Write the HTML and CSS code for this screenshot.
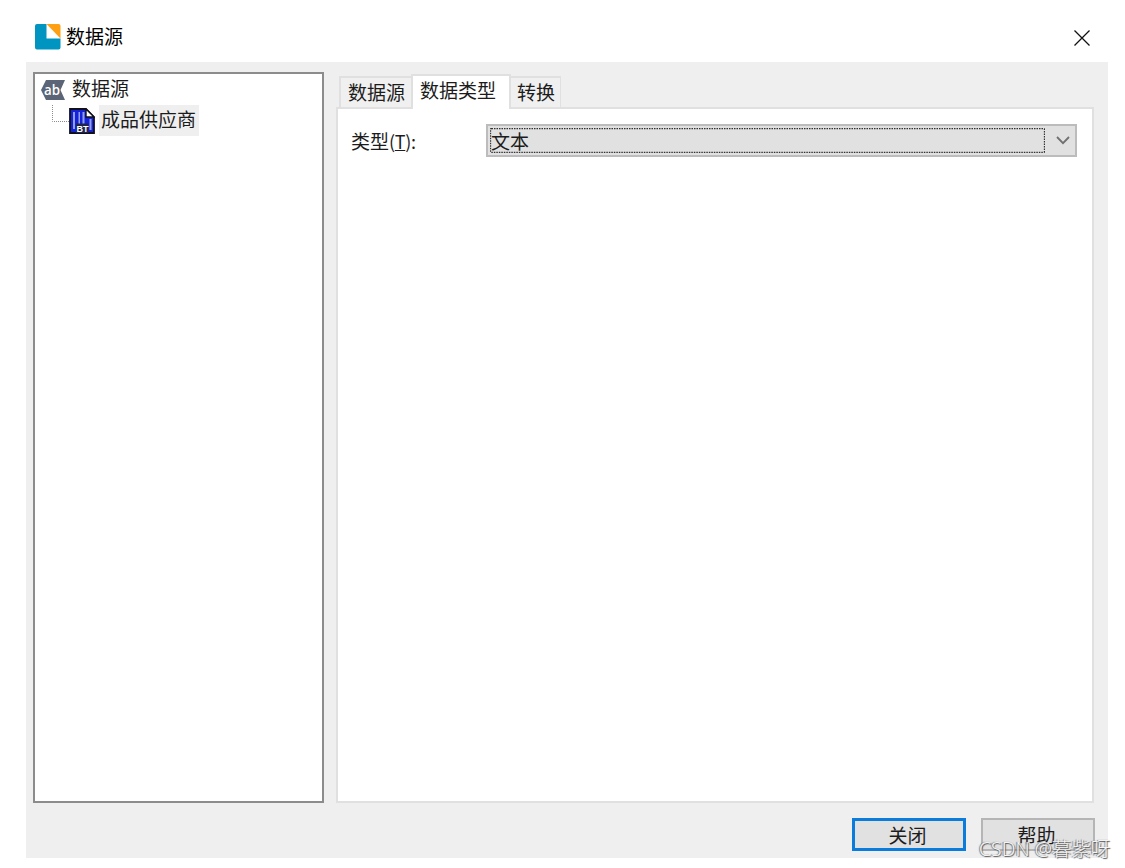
FILE: index.html
```
<!DOCTYPE html>
<html lang="zh-CN">
<head>
    <meta charset="utf-8">
    <title>数据源</title>
    <link rel="stylesheet" href="styles.css">
</head>
<body>
    <div class="dialog">
        <div class="titlebar">
            <svg class="logo" width="26" height="26" viewBox="0 0 26 26">
                <path fill="#0095c1" d="M2 0H11.500V14.500H25.500V23.500Q25.500 25.500 23.500 25.500H2Q0 25.500 0 23.500V2Q0 0 2 0Z"/>
                <path fill="#ffa012" d="M11.500 0H23.500Q25.500 0 25.500 2V14.500Z"/>
            </svg>
            <span class="title">数据源</span>
            <svg class="close" width="16" height="16" viewBox="0 0 16 16">
                <path fill="none" stroke="#111" stroke-width="1.300" d="M.5 .5 15.500 15.500M15.500 .5 .5 15.500"/>
            </svg>
        </div>

        <div class="content">
            <div class="main">
                <div class="tree">
                    <div class="tree-row">
                        <svg class="tag" width="24" height="20" viewBox="0 0 24 20">
                            <path fill="#5b6577" d="M5 0H24L19.500 10 24 20H5L0 10Z"/>
                            <text class="tag-text" x="3" y="15" textLength="16" lengthAdjust="spacingAndGlyphs">ab</text>
                        </svg>
                        <span class="tree-label">数据源</span>
                    </div>
                    <div class="tree-row child">
                        <svg class="branch" width="17" height="32" viewBox="0 0 17 32">
                            <path fill="none" stroke="#8c8c8c" stroke-dasharray="1 1" d="M.5 0V16.500H17"/>
                        </svg>
                        <svg class="doc" width="26" height="26" viewBox="0 0 26 26">
                            <path fill="#1622d8" stroke="#10101c" stroke-width="1.800" d="M1 1H17L25 9V25H1Z"/>
                            <path fill="#8fa0f6" d="M4 4H6V21H4ZM9.500 4H11V16H9.500ZM13.500 4H15.500V16H13.500ZM20.500 11H22.500V22H20.500Z"/>
                            <path fill="#fff" stroke="#10101c" stroke-width="1.400" d="M17 1V9H25Z"/>
                            <path fill="#20244c" d="M7 15.500H19.500V25H7Z"/>
                            <text class="doc-text" x="7.500" y="23.500">BT</text>
                        </svg>
                        <span class="tree-label selected">成品供应商</span>
                    </div>
                </div>

                <div class="tabs">
                    <div class="tab-list">
                        <div class="tab">数据源</div>
                        <div class="tab active">数据类型</div>
                        <div class="tab last">转换</div>
                    </div>
                    <div class="panel">
                        <div class="field">
                            <label class="field-label">类型<span class="hotkey">(<u>T</u>):</span></label>
                            <div class="select">
                                <div class="select-value">文本
                                    <svg class="focus" width="555" height="25">
                                        <rect x=".5" y=".5" width="554" height="24" rx="1" fill="none" stroke="#333" stroke-width="1.300" stroke-dasharray="1.500 1"/>
                                    </svg>
                                </div>
                                <svg class="arrow" width="14" height="9" viewBox="0 0 14 9">
                                    <path fill="none" stroke="#707070" stroke-width="1.800" d="M1 1 7 7.200 13 1"/>
                                </svg>
                            </div>
                        </div>
                    </div>
                </div>
            </div>

            <div class="buttons">
                <button class="button default">关闭</button>
                <button class="button">帮助</button>
            </div>
        </div>
    </div>
    <div class="watermark">CSDN @暮紫呀</div>
</body>
</html>
```

FILE: styles.css
```
* {
    box-sizing: border-box;
}
body {
    margin: 0;
    height: 868px;
    background: #fff;
    color: #1c1c1c;
    font-family: "Noto Sans CJK SC", sans-serif;
    font-size: 19px;
    line-height: 28px;
    position: relative;
    overflow: hidden;
}
.dialog {
    width: 1082px;
    margin-left: 26px;
}
.titlebar {
    display: flex;
    align-items: center;
    height: 62px;
    padding: 12px 18px 0 9px;
}
.title {
    flex: 1;
    margin: -2px 0 0 5px;
    font-size: 19px;
    color: #000;
}
.close {
    display: block;
    margin-top: 2px;
}
.content {
    height: 796px;
    padding: 10px 14px 0 7px;
    background: #efefef;
}
.main {
    display: flex;
    gap: 12px;
    height: 731px;
}
.tree {
    width: 291px;
    padding: 1px 0 0 6px;
    border: 2px solid #8c8c8c;
    background: #fff;
}
.tree-row {
    display: flex;
    align-items: center;
    height: 30px;
}
.tree-label {
    margin: -4px 0 0 7px;
}
.tag-text {
    fill: #fff;
    font: 600 14px "Open Sans", sans-serif;
}
.child {
    height: 32px;
    padding-left: 11px;
}
.doc {
    margin-top: -1px;
}
.doc-text {
    fill: #fff;
    font: bold 9px "Liberation Sans", sans-serif;
}
.selected {
    height: 31px;
    margin: -1px 0 0 4px;
    padding: 0 3px 0 2px;
    background: #efefef;
}
.tabs {
    display: flex;
    flex-direction: column;
    flex: 1;
    padding-top: 2px;
}
.tab-list {
    display: flex;
    align-items: flex-end;
    height: 35px;
    padding-left: 3px;
    margin-bottom: -2px;
    z-index: 1;
}
.tab {
    height: 31px;
    margin-bottom: 2px;
    padding: 0 6px 0 7px;
    border: 2px solid #e0e0e0;
    border-right-width: 1px;
    border-bottom: 0;
    background: #f0f0f0;
    line-height: 27px;
}
.tab.active {
    height: 35px;
    margin: 0 -1px;
    padding: 0 13px 0 7px;
    border-right-width: 2px;
    background: #fff;
    line-height: 28px;
}
.tab.last {
    padding: 0 5px 0 6px;
    border-left-width: 1px;
}
.panel {
    flex: 1;
    padding: 15px 15px 0 13px;
    border: 2px solid #e0e0e0;
    background: #fff;
}
.field {
    display: flex;
    align-items: center;
}
.field-label {
    width: 135px;
}
.hotkey {
    font-size: 18px;
    letter-spacing: -.3px;
}
.select {
    display: flex;
    flex: 1;
    align-items: center;
    justify-content: space-between;
    height: 33px;
    padding: 0 5px 0 2px;
    border: 2px solid #bcbcbc;
    background: #e1e1e1;
}
.select-value {
    position: relative;
    width: 555px;
    height: 25px;
    padding-left: 1px;
    line-height: 25px;
}
.focus {
    position: absolute;
    top: 0;
    left: 0;
}
.buttons {
    display: flex;
    justify-content: flex-end;
    gap: 15px;
    padding-top: 15px;
    margin-right: -1px;
}
.button {
    width: 114px;
    height: 33px;
    padding: 0 3px 1px 0;
    border: 2px solid #b5b5b5;
    background: #e1e1e1;
    color: #1c1c1c;
    font: 19px/27px "Noto Sans CJK SC", sans-serif;
}
.default {
    padding-bottom: 2px;
    border: 3px solid #0a7cdc;
}
.watermark {
    position: absolute;
    top: 835px;
    left: 979px;
    color: #f4f4f4;
    font-family: "Noto Sans", "Noto Sans CJK SC", sans-serif;
    font-size: 19.400px;
    font-weight: 300;
    white-space: nowrap;
    text-shadow: 1px 1px 1px #555, -1px 0 1px #777;
}
```
